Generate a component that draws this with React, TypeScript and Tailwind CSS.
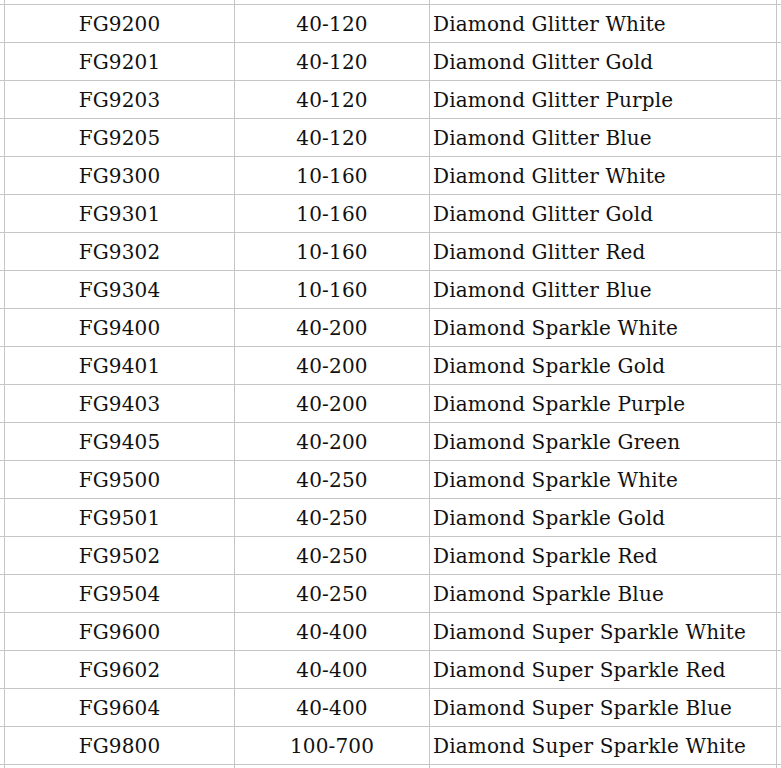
import React from 'react';

const rows: [string, string, string][] = [
  ['FG9200', '40-120', 'Diamond Glitter White'],
  ['FG9201', '40-120', 'Diamond Glitter Gold'],
  ['FG9203', '40-120', 'Diamond Glitter Purple'],
  ['FG9205', '40-120', 'Diamond Glitter Blue'],
  ['FG9300', '10-160', 'Diamond Glitter White'],
  ['FG9301', '10-160', 'Diamond Glitter Gold'],
  ['FG9302', '10-160', 'Diamond Glitter Red'],
  ['FG9304', '10-160', 'Diamond Glitter Blue'],
  ['FG9400', '40-200', 'Diamond Sparkle White'],
  ['FG9401', '40-200', 'Diamond Sparkle Gold'],
  ['FG9403', '40-200', 'Diamond Sparkle Purple'],
  ['FG9405', '40-200', 'Diamond Sparkle Green'],
  ['FG9500', '40-250', 'Diamond Sparkle White'],
  ['FG9501', '40-250', 'Diamond Sparkle Gold'],
  ['FG9502', '40-250', 'Diamond Sparkle Red'],
  ['FG9504', '40-250', 'Diamond Sparkle Blue'],
  ['FG9600', '40-400', 'Diamond Super Sparkle White'],
  ['FG9602', '40-400', 'Diamond Super Sparkle Red'],
  ['FG9604', '40-400', 'Diamond Super Sparkle Blue'],
  ['FG9800', '100-700', 'Diamond Super Sparkle White'],
];

const cell = 'border-r border-b border-[#c6c6c6] flex items-center pt-[1px]';

const Row: React.FC<{ code?: string; range?: string; name?: string; tall?: boolean }> = ({
  code = '',
  range = '',
  name = '',
  tall = true,
}) => {
  const h = tall ? 'h-[38px]' : 'h-[35px]';
  return (
    <>
      <div className={`${cell} ${h}`} />
      <div className={`${cell} ${h} justify-center`}>{code}</div>
      <div className={`${cell} ${h} justify-center`}>{range}</div>
      <div className={`${cell} ${h} pl-[3px] whitespace-nowrap`}>{name}</div>
      <div className={`${cell} ${h}`} />
    </>
  );
};

const App: React.FC = () => {
  return (
    <div className="w-[781px] h-[768px] overflow-hidden bg-white">
      <div className="grid grid-cols-[35px_230px_195px_347px_60px] -ml-[30px] -mt-[30px] font-['DejaVu_Serif',serif] text-[20px] tracking-[0.15px] text-[#111] leading-none">
        <Row tall={false} />
        {rows.map(([code, range, name]) => (
          <Row key={code} code={code} range={range} name={name} />
        ))}
        <Row />
      </div>
    </div>
  );
};

export default App;
